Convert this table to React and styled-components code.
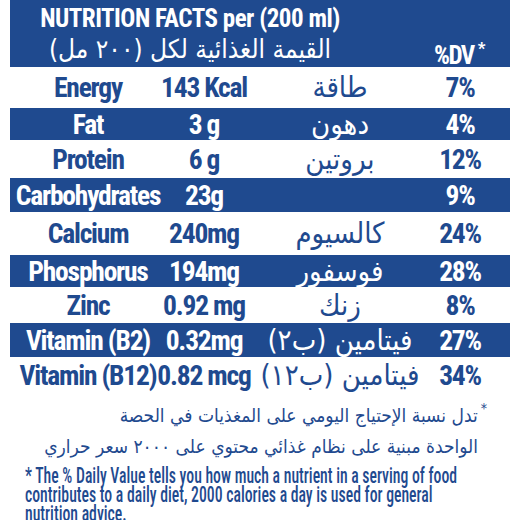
import React from 'react';
import styled, { createGlobalStyle } from 'styled-components';

const BLUE = '#1f4a8f';

const GlobalStyle = createGlobalStyle`
  body {
    margin: 0;
    background: #fff;
  }
`;

const Panel = styled.div`
  width: 520px;
  height: 520px;
  overflow: hidden;
  background: #fff;
  color: ${BLUE};
  font-family: Roboto, "Liberation Sans", sans-serif;
  font-stretch: 75%;
`;

const Table = styled.div`
  margin: 0 10px;
`;

const Header = styled.div`
  height: 67px;
  background: ${BLUE};
  color: #fff;
  display: flex;
  justify-content: space-between;
  padding: 0 26px 0 22px;
`;

const Heading = styled.div`
  display: flex;
  flex-direction: column;
  align-items: center;
  width: 316px;
`;

const Title = styled.div`
  font-size: 25px;
  font-weight: bold;
  letter-spacing: -0.5px;
  line-height: 30px;
  margin-top: 4px;
  white-space: nowrap;
`;

const ArabicTitle = styled.div`
  font-family: "DejaVu Sans", sans-serif;
  font-size: 26px;
  line-height: 30px;
  direction: rtl;
  white-space: nowrap;
`;

const DvHead = styled.div`
  align-self: flex-end;
  margin-bottom: 2px;
  font-size: 25px;
  line-height: 18px;
  font-weight: bold;
  letter-spacing: -1.5px;
  sup {
    font-size: 17px;
    vertical-align: 10px;
    margin-left: 4px;
  }
`;

const Row = styled.div`
  display: grid;
  grid-template-columns: 156px 76px 196px 44px;
  padding-right: 28px;
  height: ${p => p.$h}px;
  align-items: center;
  justify-items: center;
  background: ${p => (p.$band ? BLUE : '#fff')};
  color: ${p => (p.$band ? '#fff' : BLUE)};
`;

const Cell = styled.div`
  font-size: 27.5px;
  font-weight: bold;
  letter-spacing: -1.2px;
  white-space: nowrap;
`;

const ArabicCell = styled.div`
  font-family: "DejaVu Sans", sans-serif;
  font-size: 29px;
  line-height: 1;
  direction: rtl;
  white-space: nowrap;
`;

const ArabicNote = styled.div`
  font-family: "DejaVu Sans", sans-serif;
  font-size: 19px;
  line-height: 31px;
  direction: rtl;
  padding-right: 42px;
  white-space: nowrap;
  sup {
    font-size: 14px;
    vertical-align: 9px;
    margin-left: 3px;
    margin-right: -9px;
  }
`;

const EnglishNote = styled.div`
  font-size: 22px;
  font-weight: 500;
  line-height: 19px;
  margin: 4px 0 0 25px;
  white-space: nowrap;
  transform: scaleX(0.715);
  transform-origin: left top;
`;

const rows = [
  { en: 'Energy', val: '143 Kcal', ar: 'طاقة', dv: '7%', h: 41 },
  { en: 'Fat', val: '3 g', ar: 'دهون', dv: '4%', h: 32 },
  { en: 'Protein', val: '6 g', ar: 'بروتين', dv: '12%', h: 38 },
  { en: 'Carbohydrates', val: '23g', ar: '', dv: '9%', h: 34 },
  { en: 'Calcium', val: '240mg', ar: 'كالسيوم', dv: '24%', h: 43 },
  { en: 'Phosphorus', val: '194mg', ar: 'فوسفور', dv: '28%', h: 32 },
  { en: 'Zinc', val: '0.92 mg', ar: 'زنك', dv: '8%', h: 36 },
  { en: 'Vitamin (B2)', val: '0.32mg', ar: 'فيتامين (ب٢)', dv: '27%', h: 34 },
  { en: 'Vitamin (B12)', val: '0.82 mcg', ar: 'فيتامين (ب١٢)', dv: '34%', h: 36 },
];

const App = () => (
  <Panel>
    <GlobalStyle />
    <Table>
      <Header>
        <Heading>
          <Title>NUTRITION FACTS per (200 ml)</Title>
          <ArabicTitle>القيمة الغذائية لكل (٢٠٠ مل)</ArabicTitle>
        </Heading>
        <DvHead>
          %DV<sup>*</sup>
        </DvHead>
      </Header>
      {rows.map((r, i) => (
        <Row key={r.en} $h={r.h} $band={i % 2 === 1}>
          <Cell>{r.en}</Cell>
          <Cell>{r.val}</Cell>
          <ArabicCell>{r.ar}</ArabicCell>
          <Cell>{r.dv}</Cell>
        </Row>
      ))}
    </Table>
    <ArabicNote>
      <div>
        <sup>*</sup>تدل نسبة الإحتياج اليومي على المغذيات في الحصة
      </div>
      <div>الواحدة مبنية على نظام غذائي محتوي على ٢٠٠٠ سعر حراري</div>
    </ArabicNote>
    <EnglishNote>
      * The % Daily Value tells you how much a nutrient in a serving of food
      <br />
      contributes to a daily diet, 2000 calories a day is used for general
      <br />
      nutrition advice.
    </EnglishNote>
  </Panel>
);

export default App;
